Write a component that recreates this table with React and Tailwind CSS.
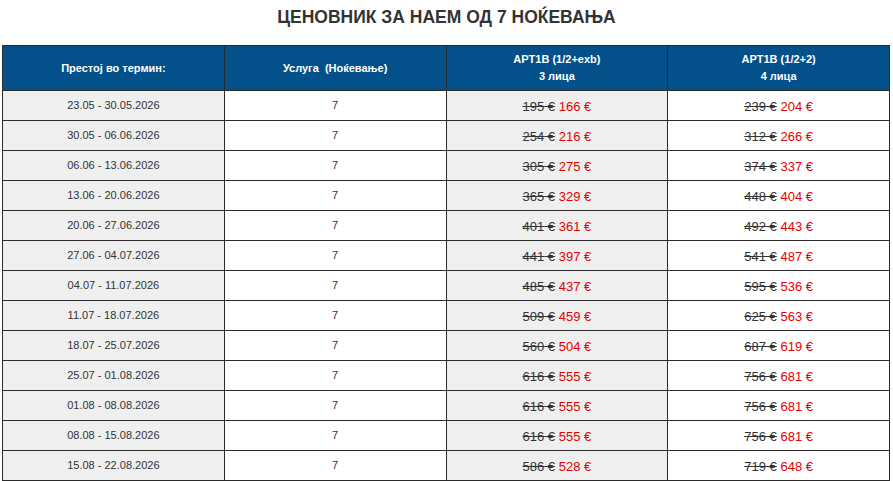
import React from "react";

const rows = [
  ["23.05 - 30.05.2026", "195", "166", "239", "204"],
  ["30.05 - 06.06.2026", "254", "216", "312", "266"],
  ["06.06 - 13.06.2026", "305", "275", "374", "337"],
  ["13.06 - 20.06.2026", "365", "329", "448", "404"],
  ["20.06 - 27.06.2026", "401", "361", "492", "443"],
  ["27.06 - 04.07.2026", "441", "397", "541", "487"],
  ["04.07 - 11.07.2026", "485", "437", "595", "536"],
  ["11.07 - 18.07.2026", "509", "459", "625", "563"],
  ["18.07 - 25.07.2026", "560", "504", "687", "619"],
  ["25.07 - 01.08.2026", "616", "555", "756", "681"],
  ["01.08 - 08.08.2026", "616", "555", "756", "681"],
  ["08.08 - 15.08.2026", "616", "555", "756", "681"],
  ["15.08 - 22.08.2026", "586", "528", "719", "648"],
];

function Price({ oldPrice, newPrice }) {
  return (
    <span className="text-[13px]">
      <s className="text-[#333]">{oldPrice} €</s>{" "}
      <span className="text-[#e50000]">{newPrice} €</span>
    </span>
  );
}

function App() {
  return (
    <div className="min-h-screen bg-white font-['Liberation_Sans',Arial,sans-serif] text-[#333]">
      <h1 className="h-[34px] pt-[5px] text-center text-[17.5px] font-bold leading-[24px] text-[#333]">
        ЦЕНОВНИК ЗА НАЕМ ОД 7 НОЌЕВАЊА
      </h1>
      <table className="ml-[2px] mt-[11px] w-[888px] table-fixed border-collapse">
        <thead>
          <tr className="h-[45px] bg-[#03508a] text-[11px] font-bold text-white">
            <th className="border border-[#2b2b2b]">Престој во термин:</th>
            <th className="border border-[#2b2b2b]">Услуга &nbsp;(Ноќевање)</th>
            <th className="border border-[#2b2b2b] leading-[17px]">
              APT1B (1/2+exb)
              <br />3 лица
            </th>
            <th className="border border-[#2b2b2b] leading-[17px]">
              APT1B (1/2+2)
              <br />4 лица
            </th>
          </tr>
        </thead>
        <tbody>
          {rows.map((r) => (
            <tr key={r[0]} className="h-[30px] text-center">
              <td className="border border-[#2b2b2b] bg-[#efefef] text-[11px]">{r[0]}</td>
              <td className="border border-[#2b2b2b] bg-white text-[11px]">7</td>
              <td className="border border-[#2b2b2b] bg-[#efefef]">
                <Price oldPrice={r[1]} newPrice={r[2]} />
              </td>
              <td className="border border-[#2b2b2b] bg-white">
                <Price oldPrice={r[3]} newPrice={r[4]} />
              </td>
            </tr>
          ))}
          <tr className="h-[30px]">
            <td className="border border-[#2b2b2b] bg-[#efefef]"></td>
            <td className="border border-[#2b2b2b] bg-white"></td>
            <td className="border border-[#2b2b2b] bg-[#efefef]"></td>
            <td className="border border-[#2b2b2b] bg-white"></td>
          </tr>
        </tbody>
      </table>
    </div>
  );
}

export default App;
